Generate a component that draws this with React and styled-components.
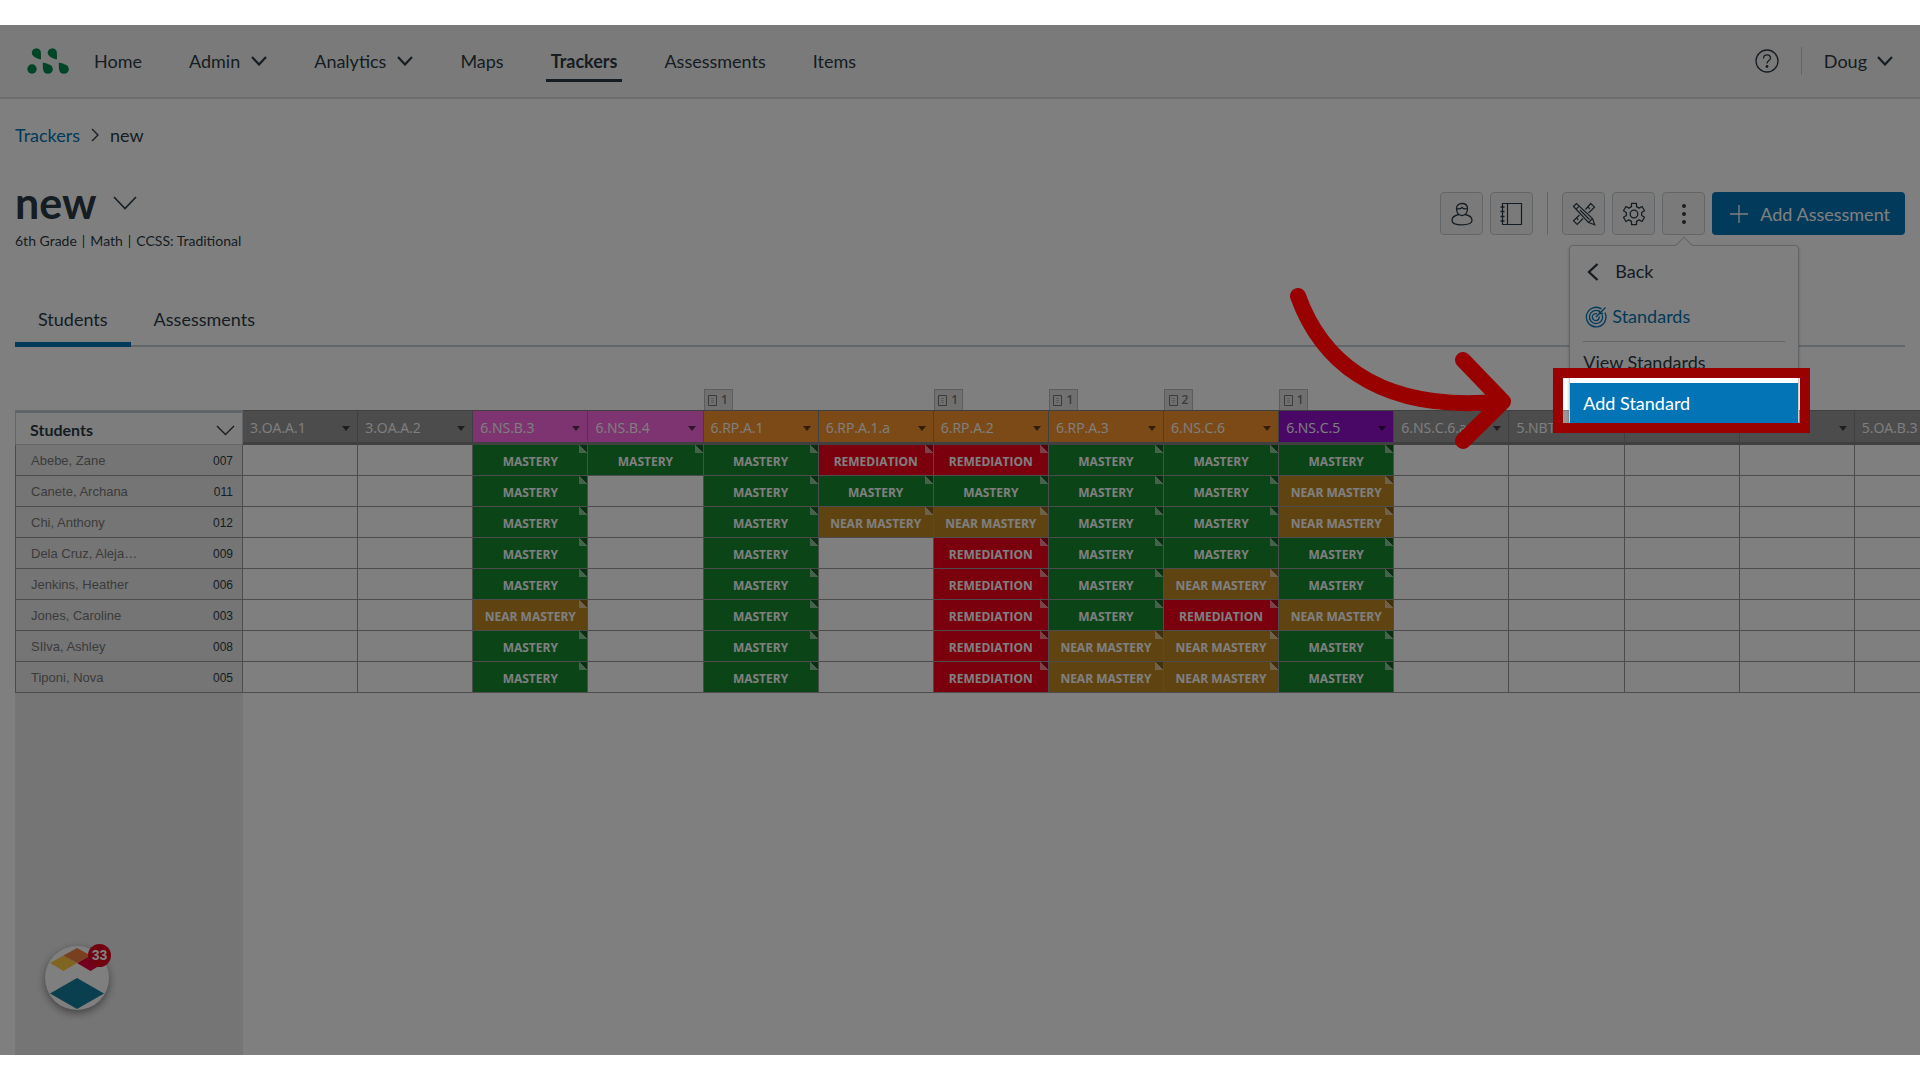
import React from 'react'
import styled, { createGlobalStyle, ThemeProvider } from 'styled-components'

const theme = {
  ink: '#2d3b45',
  brand: '#0374b5',
  line: '#999999',
  rule: '#c7cdd1',
  panel: '#ebebeb',
  callout: '#990000',
  ui: "Lato, 'Liberation Sans', sans-serif",
  grid: "'Open Sans', 'Noto Sans', sans-serif",
  names: "'Liberation Sans', Arial, sans-serif",
  levels: { M: '#14882e', N: '#be8824', R: '#f4001c' }
}

const GlobalStyle = createGlobalStyle`
  *, *::before, *::after {
    box-sizing: border-box;
  }
  body {
    margin: 0;
    background: #ffffff;
  }
  button {
    font: inherit;
    color: inherit;
    padding: 0;
    border: 0;
    background: none;
    cursor: pointer;
  }
  a {
    color: inherit;
    text-decoration: none;
  }
`

const standards = [
  { code: '3.OA.A.1', color: '#999999' },
  { code: '3.OA.A.2', color: '#999999' },
  { code: '6.NS.B.3', color: '#fa68e0' },
  { code: '6.NS.B.4', color: '#fa68e0' },
  { code: '6.RP.A.1', color: '#f8942e', count: 1 },
  { code: '6.RP.A.1.a', color: '#f8942e' },
  { code: '6.RP.A.2', color: '#f8942e', count: 1 },
  { code: '6.RP.A.3', color: '#f8942e', count: 1 },
  { code: '6.NS.C.6', color: '#f8942e', count: 2 },
  { code: '6.NS.C.5', color: '#9210ca', count: 1 },
  { code: '6.NS.C.6.a', color: '#999999' },
  { code: '5.NBT.A.1', color: '#999999' },
  { code: 'New Standard...', color: '#999999' },
  { code: '5.OA.A.2', color: '#999999' },
  { code: '5.OA.B.3', color: '#999999' }
]

// one letter per standard, '.' is not assessed
const students = [
  { name: 'Abebe, Zane', id: '007', scores: '..MMMRRMMM.....' },
  { name: 'Canete, Archana', id: '011', scores: '..M.MMMMMN.....' },
  { name: 'Chi, Anthony', id: '012', scores: '..M.MNNMMN.....' },
  { name: 'Dela Cruz, Aleja…', id: '009', scores: '..M.M.RMMM.....' },
  { name: 'Jenkins, Heather', id: '006', scores: '..M.M.RMNM.....' },
  { name: 'Jones, Caroline', id: '003', scores: '..N.M.RMRN.....' },
  { name: 'SIlva, Ashley', id: '008', scores: '..M.M.RNNM.....' },
  { name: 'Tiponi, Nova', id: '005', scores: '..M.M.RNNM.....' }
]

const labels = { M: 'MASTERY', N: 'NEAR MASTERY', R: 'REMEDIATION' }

const Page = styled.div`
  min-height: 100vh;
  padding: 25px 0;
  display: flex;
  flex-direction: column;
  font-family: ${props => props.theme.ui};
  font-size: 18px;
  line-height: 24px;
  color: ${props => props.theme.ink};
`

const Shell = styled.div`
  position: relative;
  flex: 1;
  display: flex;
  flex-direction: column;
  overflow: hidden;
  background: #ffffff;
`

const TopBar = styled.header`
  display: flex;
  align-items: center;
  height: 74px;
  padding: 0 27px;
  background: #f5f5f5;
  border-bottom: 2px solid #dddddd;
`

const Nav = styled.nav`
  display: flex;
  gap: 37px;
  margin-left: 20px;
  flex: 1;
`

const NavLink = styled.a`
  display: flex;
  align-items: center;
  gap: 11px;
  padding: 0 5px;
  line-height: 35px;
  border-top: 3px solid transparent;
  border-bottom: 3px solid ${props => (props.$active ? props.theme.ink : 'transparent')};
  font-weight: ${props => (props.$active ? 700 : 400)};
`

const Account = styled.div`
  display: flex;
  align-items: center;
  gap: 22px;
`

const UserButton = styled.button`
  display: flex;
  align-items: center;
  gap: 10px;
`

const IconButton = styled.button`
  display: flex;
`

const Divider = styled.span`
  width: 1px;
  height: ${props => props.$height};
  background: ${props => props.theme.rule};
`

const Main = styled.main`
  flex: 1;
  display: flex;
  flex-direction: column;
  padding-left: 15px;
`

const Breadcrumb = styled.nav`
  display: flex;
  align-items: center;
  gap: 11px;
  margin-top: 24px;
  a {
    color: ${props => props.theme.brand};
  }
`

const Heading = styled.div`
  display: flex;
  justify-content: space-between;
  align-items: flex-start;
  margin: 32px 15px 0 0;
`

const Title = styled.div`
  display: flex;
  align-items: center;
  gap: 17px;
  h1 {
    margin: 0;
    font-size: 43px;
    line-height: 48px;
    font-weight: 700;
  }
`

const Subtitle = styled.div`
  display: flex;
  gap: 5px;
  margin-top: 4px;
  font-size: 14px;
  line-height: 20px;
`

const Toolbar = styled.div`
  display: flex;
  align-items: center;
  gap: 7px;
  margin-top: 13px;
`

const Separator = styled.span`
  margin: 0 7px;
  display: flex;
`

const ToolButton = styled.button`
  display: flex;
  align-items: center;
  justify-content: center;
  width: 43px;
  height: 43px;
  border: 1px solid ${props => props.theme.rule};
  border-radius: 4px;
  background: #f5f5f5;
`

const AddButton = styled.button`
  display: flex;
  align-items: center;
  gap: 12px;
  height: 43px;
  padding: 0 15px 0 18px;
  border-radius: 4px;
  background: ${props => props.theme.brand};
  color: #ffffff;
`

const MenuAnchor = styled.div`
  position: relative;
`

const Menu = styled.div`
  position: absolute;
  z-index: 10;
  top: 53px;
  left: -93px;
  width: 230px;
  border: 1px solid ${props => props.theme.rule};
  border-radius: 4px;
  background: #ffffff;
  box-shadow: 0 1px 3px rgba(0, 0, 0, 0.25);
  &::before {
    content: '';
    position: absolute;
    top: -7px;
    left: 108px;
    width: 12px;
    height: 12px;
    border: solid ${props => props.theme.rule};
    border-width: 1px 0 0 1px;
    background: #ffffff;
    transform: rotate(45deg);
  }
`

const MenuHead = styled.div`
  display: flex;
  flex-direction: column;
  margin: 0 13px;
  padding: 3px 0 2px;
  border-bottom: 1px solid ${props => props.theme.rule};
`

const MenuBack = styled.button`
  display: flex;
  align-items: center;
  gap: 16px;
  padding: 0 4px;
  line-height: 45px;
`

const MenuTitle = styled.div`
  display: flex;
  align-items: center;
  gap: 5px;
  padding-left: 2px;
  line-height: 45px;
  color: ${props => props.theme.brand};
`

const MenuItem = styled.button`
  display: block;
  width: 100%;
  padding: 0 13px;
  text-align: left;
  line-height: 41px;
  color: ${props => (props.$active ? '#ffffff' : props.theme.ink)};
  background: ${props => (props.$active ? props.theme.brand : 'transparent')};
`

// frame round the active item, its shadow dims everything outside
const Spotlight = styled.div`
  position: absolute;
  top: 122px;
  left: -17px;
  width: 257px;
  height: 65px;
  border: 10px solid ${props => props.theme.callout};
  box-shadow: 0 0 0 3000px rgba(0, 0, 0, 0.5);
  pointer-events: none;
`

const CalloutArrow = styled.svg`
  position: absolute;
  top: 39px;
  left: -290px;
  fill: none;
  stroke: ${props => props.theme.callout};
  stroke-width: 16px;
  stroke-linecap: round;
  stroke-linejoin: round;
  pointer-events: none;
`

const Tabs = styled.div`
  display: flex;
  margin: 51px 15px 42px 0;
  border-bottom: 2px solid ${props => props.theme.rule};
`

const Tab = styled.button`
  padding: 0 23px 6px;
  margin-bottom: -2px;
  line-height: 34px;
  border-bottom: 5px solid ${props => (props.$active ? props.theme.brand : 'transparent')};
`

const Grid = styled.table`
  width: 1955px;
  table-layout: fixed;
  border-collapse: separate;
  border-spacing: 0;
  th,
  td {
    padding: 0;
  }
`

const NameCol = styled.col`
  width: 228px;
`

const BadgeCell = styled.td`
  height: 21px;
`

const Badge = styled.span`
  display: flex;
  align-items: center;
  justify-content: center;
  gap: 4px;
  width: 29px;
  height: 21px;
  border: 1px solid #bbbbbb;
  border-width: 1px 1px 0 1px;
  background: #e0e0e0;
  color: #777777;
  font-family: ${props => props.theme.grid};
  font-size: 12px;
  font-weight: 600;
`

const StudentsHead = styled.th`
  height: 35px;
  border: 1px solid ${props => props.theme.rule};
  border-top: 3px solid #bfcdd4;
  background: #fafbfc;
  font-size: 16px;
  font-weight: 700;
`

const StudentsSort = styled.button`
  display: flex;
  align-items: center;
  justify-content: space-between;
  width: 100%;
  padding: 3px 7px 0 14px;
`

const StandardHead = styled.th`
  height: 35px;
  border-top: 1px solid #808080;
  border-right: 1px solid #808080;
  border-bottom: 3px solid #808080;
  background: ${props => props.color};
  font-family: ${props => props.theme.grid};
  font-size: 14px;
  font-weight: 400;
  color: #ffffff;
`

const StandardMenu = styled.button`
  display: flex;
  align-items: center;
  justify-content: space-between;
  width: 100%;
  padding: 3px 7px 0;
  line-height: 28px;
  white-space: nowrap;
  &::after {
    content: '';
    border: 4px solid transparent;
    border-top: 5px solid rgba(0, 0, 0, 0.6);
    border-bottom: 0;
  }
`

const NameCell = styled.th`
  height: 31px;
  border: 1px solid ${props => props.theme.line};
  border-top: 0;
  background: ${props => props.theme.panel};
  font-family: ${props => props.theme.names};
  font-size: 13px;
  font-weight: 400;
  div {
    display: flex;
    justify-content: space-between;
    padding: 2px 9px 0 15px;
    color: #777777;
  }
  span {
    color: ${props => props.theme.ink};
    font-size: 12px;
  }
`

const ScoreCell = styled.td`
  position: relative;
  height: 31px;
  border: solid ${props => props.theme.line};
  border-width: 0 1px 1px 0;
  background: ${props => props.theme.levels[props.$level] || '#ffffff'};
  color: #ffffff;
  font-family: ${props => props.theme.grid};
  font-size: 12px;
  font-weight: 700;
  text-align: center;
  white-space: nowrap;
  div {
    padding-top: 3px;
  }
  &::after {
    content: '';
    display: ${props => (props.$level ? 'block' : 'none')};
    position: absolute;
    top: 0;
    right: 0;
    width: 8px;
    height: 8px;
    background: linear-gradient(
      to top right,
      rgba(255, 255, 255, 0.5) 55%,
      rgba(0, 0, 0, 0.3) 55%
    );
  }
`

const Gutter = styled.div`
  flex: 1;
  width: 228px;
  background: ${props => props.theme.panel};
`

const HelpBubble = styled.button`
  position: absolute;
  left: 45px;
  bottom: 45px;
  width: 64px;
  height: 64px;
  border-radius: 50%;
  background: #ffffff;
  box-shadow: 0 3px 8px rgba(0, 0, 0, 0.45);
  svg {
    display: block;
  }
`

const Unread = styled.span`
  position: absolute;
  top: -2px;
  right: -2px;
  width: 23px;
  height: 23px;
  border-radius: 50%;
  background: #e0061f;
  color: #ffffff;
  font-family: ${props => props.theme.names};
  font-size: 14px;
  font-weight: 700;
  line-height: 23px;
`

const Stroke = styled.svg`
  flex: none;
  fill: none;
  stroke: currentColor;
  stroke-width: ${props => props.$weight || 1.3};
`

const Chevron = ({ w = 16, h = 10, weight = 2.2 }) => (
  <Stroke width={w} height={h} viewBox={`0 0 ${w} ${h}`} $weight={weight}>
    <path d={`M1 1L${w / 2} ${h - 1.5}L${w - 1} 1`} />
  </Stroke>
)

const Logo = () => (
  <svg width="42" height="28" viewBox="0 0 42 28" fill="#008a4c">
    <path d="M14 12.500C8 11 4.800 9 4.800 5.500A4.700 4.700 0 0 1 13.700 4C14 6.500 14 9.500 14 12.500Z" />
    <path d="M30 12.500C24 11 20.700 9 20.700 5.500A4.700 4.700 0 0 1 29.600 4C30 6.500 30 9.500 30 12.500Z" />
    <circle cx="5" cy="22" r="4.700" />
    <path d="M15.800 15.500C21.500 17 25.800 18 25.800 22A4.900 4.900 0 0 1 16.300 23.500C15.800 21 15.800 18.500 15.800 15.500Z" />
    <path d="M31.800 15.500C37.500 17 41.800 18 41.800 22A4.900 4.900 0 0 1 32.300 23.500C31.800 21 31.800 18.500 31.800 15.500Z" />
  </svg>
)

const HelpIcon = () => (
  <Stroke width="24" height="24" viewBox="0 0 24 24">
    <circle cx="12" cy="12" r="11" />
    <path d="M8.500 9.500C8.500 7 10 5.800 12 5.800S15.500 7.200 15.500 9C15.500 11.500 12 11.500 12 14.500" />
    <circle cx="12" cy="17.500" r="0.800" fill="currentColor" />
  </Stroke>
)

const PersonIcon = () => (
  <Stroke width="24" height="24" viewBox="0 0 24 24">
    <path d="M8.500 12.200C7 10.800 6.500 9 6.500 6.800C6.500 3.300 8.800 1.500 12 1.500S17.500 3.300 17.500 6.800C17.500 9 17 10.800 15.500 12.200" />
    <path d="M6.500 6.500C9 7.500 11 6.500 12 5.500C13.500 7 15.500 7.200 17.500 6.500" />
    <path d="M9 12.500C4 13.500 2 15.500 2 18.200C2 21.500 6.500 22.800 12 22.800S22 21.500 22 18.200C22 15.500 20 13.500 15 12.500C13 13.800 11 13.800 9 12.500Z" />
  </Stroke>
)

const NotebookIcon = () => (
  <Stroke width="24" height="24" viewBox="0 0 24 24">
    <path d="M2.500 1.500H21.500V22.500H2.500ZM7.500 1.500V22.500" strokeWidth="1.200" />
    <path d="M0.500 5H4.500M0.500 9.500H4.500M0.500 14.500H4.500M0.500 19H4.500" strokeWidth="1.600" />
  </Stroke>
)

const DesignIcon = () => (
  <Stroke width="24" height="24" viewBox="0 0 24 24" $weight={1.2}>
    <path d="M13.500 7.500L18.800 1.500L22.500 5.200L16.500 11M11 16.500L5.200 22.500L1.500 18.800L7.500 13" />
    <path d="M16 5L17.800 6.800M4.500 16L6.300 17.800" />
    <path d="M1.500 4.500L4.500 1.500L20.500 16.500L22.800 22.800L16.500 20.500ZM4.200 7.200L7.200 4.200M16.500 20.500L20.500 16.500M8 8L17.500 17.500" />
  </Stroke>
)

const gearPoints = [0, 60, 120, 180, 240, 300]
  .flatMap(turn => [
    [turn - 19, 7.8],
    [turn - 13, 11],
    [turn + 13, 11],
    [turn + 19, 7.8]
  ])
  .map(([deg, r]) => {
    const a = (deg * Math.PI) / 180
    return `${(12 + r * Math.sin(a)).toFixed(2)},${(12 - r * Math.cos(a)).toFixed(2)}`
  })
  .join(' ')

const GearIcon = () => (
  <Stroke width="24" height="24" viewBox="0 0 24 24">
    <polygon points={gearPoints} strokeLinejoin="round" />
    <circle cx="12" cy="12" r="3.800" />
  </Stroke>
)

const MoreIcon = () => (
  <svg width="24" height="24" viewBox="0 0 24 24" fill="currentColor">
    <circle cx="12" cy="4" r="2" />
    <circle cx="12" cy="12" r="2" />
    <circle cx="12" cy="20" r="2" />
  </svg>
)

const PlusIcon = () => (
  <Stroke width="18" height="18" viewBox="0 0 18 18">
    <path d="M9 0V18M0 9H18" />
  </Stroke>
)

const TargetIcon = () => (
  <Stroke width="22" height="22" viewBox="0 0 22 22">
    <path d="M16.500 2.900A9.800 9.800 0 1 0 19.800 6.500" />
    <path d="M14.500 5.400A6.600 6.600 0 1 0 17.200 8.700" />
    <path d="M12.200 7.900A3.500 3.500 0 1 0 14.200 10.300" />
    <path d="M11 11L20.500 1.500M14.500 7.500V4.500M14.500 7.500H18" />
  </Stroke>
)

const SheetIcon = () => (
  <Stroke width="9" height="11" viewBox="0 0 9 11" $weight={1}>
    <path d="M0.500 0.500H8.500V10.500H0.500Z" />
    <path d="M3 3.500H6M3 5.500H6M3 7.500H6" opacity="0.400" />
  </Stroke>
)

const links = [
  { text: 'Home' },
  { text: 'Admin', menu: true },
  { text: 'Analytics', menu: true },
  { text: 'Maps' },
  { text: 'Trackers', active: true },
  { text: 'Assessments' },
  { text: 'Items' }
]

const Header = () => (
  <TopBar>
    <Logo />
    <Nav>
      {links.map(link => (
        <NavLink key={link.text} href="#" $active={link.active}>
          {link.text}
          {link.menu && <Chevron />}
        </NavLink>
      ))}
    </Nav>
    <Account>
      <IconButton aria-label="Help">
        <HelpIcon />
      </IconButton>
      <Divider $height="28px" />
      <UserButton>
        Doug
        <Chevron />
      </UserButton>
    </Account>
  </TopBar>
)

const MoreMenu = () => (
  <Menu>
    <MenuHead>
      <MenuBack>
        <Stroke width="12" height="18" viewBox="0 0 12 18" $weight={2.4}>
          <path d="M10.500 1L2 9L10.500 17" />
        </Stroke>
        Back
      </MenuBack>
      <MenuTitle>
        <TargetIcon />
        Standards
      </MenuTitle>
    </MenuHead>
    <MenuItem>View Standards</MenuItem>
    <MenuItem $active>Add Standard</MenuItem>
    <Spotlight />
    <CalloutArrow width="240" height="170" viewBox="0 0 240 170">
      <path d="M18 11C38 67 90 129 220 116.500" />
      <path d="M183 75L223 116.500L183 156" />
    </CalloutArrow>
  </Menu>
)

const TrackerGrid = () => (
  <Grid>
    <colgroup>
      <NameCol />
      {standards.map(s => (
        <col key={s.code} />
      ))}
    </colgroup>
    <thead>
      <tr>
        <BadgeCell />
        {standards.map(s => (
          <BadgeCell key={s.code}>
            {s.count && (
              <Badge>
                <SheetIcon />
                {s.count}
              </Badge>
            )}
          </BadgeCell>
        ))}
      </tr>
      <tr>
        <StudentsHead scope="col">
          <StudentsSort>
            Students
            <Chevron w={19} h={11} weight={1.4} />
          </StudentsSort>
        </StudentsHead>
        {standards.map(s => (
          <StandardHead key={s.code} scope="col" color={s.color}>
            <StandardMenu>{s.code}</StandardMenu>
          </StandardHead>
        ))}
      </tr>
    </thead>
    <tbody>
      {students.map(student => (
        <tr key={student.id}>
          <NameCell scope="row">
            <div>
              {student.name}
              <span>{student.id}</span>
            </div>
          </NameCell>
          {student.scores.split('').map((level, i) => (
            <ScoreCell key={standards[i].code} $level={level === '.' ? undefined : level}>
              {labels[level] && <div>{labels[level]}</div>}
            </ScoreCell>
          ))}
        </tr>
      ))}
    </tbody>
  </Grid>
)

export default () => (
  <ThemeProvider theme={theme}>
    <GlobalStyle />
    <Page>
      <Shell>
        <Header />
        <Main>
          <Breadcrumb>
            <a href="#">Trackers</a>
            <Stroke width="8" height="14" viewBox="0 0 8 14">
              <path d="M1 1L7 7L1 13" />
            </Stroke>
            <span>new</span>
          </Breadcrumb>
          <Heading>
            <div>
              <Title>
                <h1>new</h1>
                <Chevron w={24} h={14} weight={1.6} />
              </Title>
              <Subtitle>
                <span>6th Grade</span>
                <span>|</span>
                <span>Math</span>
                <span>|</span>
                <span>CCSS: Traditional</span>
              </Subtitle>
            </div>
            <Toolbar>
              <ToolButton aria-label="Students">
                <PersonIcon />
              </ToolButton>
              <ToolButton aria-label="Gradebook">
                <NotebookIcon />
              </ToolButton>
              <Separator>
                <Divider $height="43px" />
              </Separator>
              <ToolButton aria-label="Design">
                <DesignIcon />
              </ToolButton>
              <ToolButton aria-label="Settings">
                <GearIcon />
              </ToolButton>
              <MenuAnchor>
                <ToolButton aria-label="More">
                  <MoreIcon />
                </ToolButton>
                <MoreMenu />
              </MenuAnchor>
              <AddButton>
                <PlusIcon />
                Add Assessment
              </AddButton>
            </Toolbar>
          </Heading>
          <Tabs role="tablist">
            <Tab role="tab" aria-selected="true" $active>
              Students
            </Tab>
            <Tab role="tab" aria-selected="false">
              Assessments
            </Tab>
          </Tabs>
          <TrackerGrid />
          <Gutter />
        </Main>
        <HelpBubble aria-label="Help center">
          <svg width="64" height="64" viewBox="0 0 64 64">
            <path d="M5 17L18.500 9.500L32 17L18.500 25Z" fill="#ffc845" />
            <path d="M32 17L45.500 9.500L59 17L45.500 25Z" fill="#e6003c" />
            <path d="M32 2L45.500 9.500L32 17L18.500 9.500Z" fill="#f08040" />
            <path d="M32 32L59 47.500L32 63L5 47.500Z" fill="#137e9c" />
          </svg>
          <Unread>33</Unread>
        </HelpBubble>
      </Shell>
    </Page>
  </ThemeProvider>
)
